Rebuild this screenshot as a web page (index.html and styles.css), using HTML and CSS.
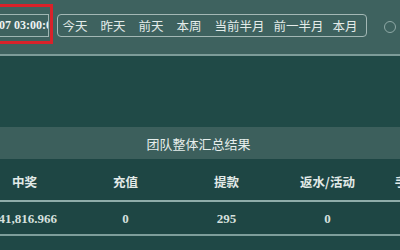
FILE: index.html
```html
<!DOCTYPE html>
<html lang="zh-CN">
<head>
<meta charset="utf-8">
<link rel="stylesheet" href="styles.css">
</head>
<body>
<div class="page">
  <div class="toolbar">
    <div class="date-input"><span class="date-text">2023-06-07 03:00:00</span></div>
    <div class="quick">
      <span class="q">今天</span>
      <span class="q">昨天</span>
      <span class="q">前天</span>
      <span class="q">本周</span>
      <span class="q">当前半月</span>
      <span class="q">前一半月</span>
      <span class="q">本月</span>
    </div>
    <span class="circle"></span>
    <div class="mark"></div>
  </div>
  <div class="blank"></div>
  <div class="summary">
    <div class="title">团队整体汇总结果</div>
    <div class="row head">
      <span>中奖</span><span>充值</span><span>提款</span><span>返水/活动</span><span>手续费/佣金</span>
    </div>
    <div class="row data">
      <span>141,816.966</span><span>0</span><span>295</span><span>0</span><span>0</span>
    </div>
  </div>
</div>
</body>
</html>
```

FILE: styles.css
```css
* { box-sizing: border-box; }
html, body { margin: 0; padding: 0; }
body {
  width: 400px;
  height: 250px;
  overflow: hidden;
  background: #1f4846;
  font-family: "Noto Sans CJK SC", "Noto Sans", sans-serif;
}
.page {
  width: 400px;
  height: 250px;
  overflow: hidden;
}
.toolbar {
  position: relative;
  height: 56px;
  background: #3e625f;
  border-bottom: 2px solid #7d9c99;
  display: flex;
  align-items: flex-start;
  padding-top: 14px;
}
.date-input {
  margin-left: -20px;
  width: 69px;
  height: 23px;
  border: 1px solid #9fb6b3;
  display: flex;
  justify-content: flex-end;
  align-items: center;
  overflow: hidden;
}
.date-text {
  white-space: nowrap;
  font-family: "Liberation Serif", serif;
  font-weight: bold;
  font-size: 12px;
  color: #eef3f2;
  margin-right: -10px;
}
.quick {
  margin-left: 8px;
  height: 23px;
  border: 1px solid #a3b8b5;
  border-radius: 4px;
  display: flex;
  align-items: center;
}
.q {
  font-size: 12.5px;
  color: #e3ebe9;
  padding: 0 4.5px;
  min-width: 38px;
  line-height: 21px;
  white-space: nowrap;
}
.circle {
  width: 12px;
  height: 12px;
  border: 1.5px solid #8fa9a6;
  border-radius: 50%;
  margin-left: 17px;
  margin-top: 7px;
}
.mark {
  position: absolute;
  left: -10px;
  top: 4px;
  width: 63px;
  height: 40px;
  border: 3px solid #d8222a;
}
.blank {
  height: 71px;
  background: #204a47;
}
.summary {
  margin-left: -26px;
}
.title {
  height: 32px;
  background: #3c5f5c;
  display: flex;
  align-items: center;
  justify-content: center;
  padding-left: 23px;
  font-size: 13px;
  color: #e6eeec;
}
.row {
  display: grid;
  grid-template-columns: repeat(5, 101px);
  align-items: center;
  justify-items: center;
  background: #1e4644;
}
.row.head {
  height: 43px;
  border-bottom: 2px solid #8fadaa;
  font-size: 12.5px;
  font-weight: bold;
  color: #e2eae8;
  padding-top: 3px;
}
.row.data {
  height: 34px;
  border-bottom: 2px solid #7e9e9b;
  font-family: "Liberation Serif", serif;
  font-weight: bold;
  font-size: 13px;
  color: #d6e0de;
  padding-top: 2px;
}
```
